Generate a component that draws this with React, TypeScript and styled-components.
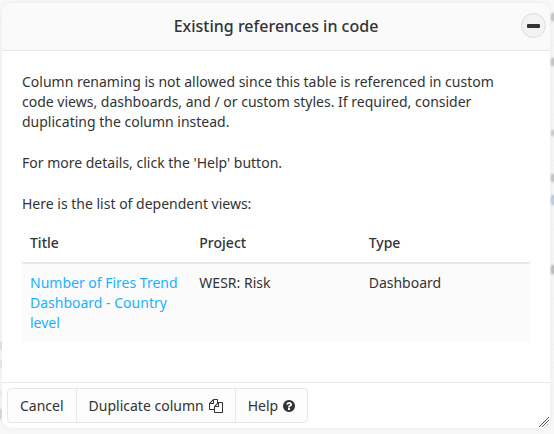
import React from "react";
import styled, { createGlobalStyle } from "styled-components";

const GlobalStyle = createGlobalStyle`
  *, *::before, *::after { box-sizing: border-box; }
  body {
    margin: 0;
    background: #f7f7f7;
    color: #333;
    font: 14px/20px "Noto Sans", "Open Sans", sans-serif;
  }
`;

const Page = styled.div`
  position: relative;
  min-height: 100vh;
  overflow: hidden;
  padding: 3px 4px 6px 2px;
`;

const Backdrop = styled.div`
  position: absolute;
  inset: 0;
  overflow: hidden;
  background: repeating-linear-gradient(#f8f8f8 0 22px, #f4f4f4 22px 23px);
`;

const Smudge = styled.span<{ $top: number; $side: "left" | "right"; $color: string; $height: number }>`
  position: absolute;
  top: ${(p) => p.$top}px;
  ${(p) => p.$side}: -2px;
  width: 5px;
  height: ${(p) => p.$height}px;
  border: 2px solid ${(p) => p.$color};
  border-radius: 3px;
  filter: blur(1px);
  opacity: 0.7;
`;

const Modal = styled.section`
  position: relative;
  display: flex;
  flex-direction: column;
  background: #fff;
  border-radius: 10px;
  box-shadow: 0 0 8px rgba(0, 0, 0, 0.06);
  overflow: hidden;
`;

const Header = styled.header`
  display: grid;
  grid-template-columns: 28px 1fr 28px;
  align-items: center;
  height: 48px;
  padding: 0 4px 2px;
  background: #fafafa;
  border-bottom: 1px solid #e7e7e7;
`;

const Heading = styled.h1`
  grid-column: 2;
  margin: 0;
  font-size: 16px;
  line-height: 24px;
  font-weight: 500;
  text-align: center;
`;

const CloseButton = styled.button`
  display: flex;
  align-items: center;
  justify-content: center;
  justify-self: end;
  width: 25px;
  height: 25px;
  padding: 0;
  border: 1px solid #ddd;
  border-radius: 50%;
  background: #f3f3f3;
  color: #333;
  cursor: pointer;
`;

const Body = styled.div`
  display: flex;
  flex-direction: column;
  gap: 21px;
  padding: 21px 20px 40px;
`;

const Text = styled.p`
  margin: 0;
`;

const Listing = styled.div`
  display: flex;
  flex-direction: column;
  gap: 10px;
`;

const Table = styled.table`
  width: 100%;
  table-layout: fixed;
  border-collapse: separate;
  border-spacing: 0;
`;

const HeadCell = styled.th`
  padding: 9px 8px;
  border-bottom: 2px solid #e7e7e7;
  font-weight: 500;
  text-align: left;
`;

const Cell = styled.td`
  padding: 9px 8px;
  background: #fbfbfb;
  vertical-align: top;
`;

const ViewLink = styled.a`
  color: #1bb1fa;
  text-decoration: none;
`;

const Footer = styled.footer`
  display: flex;
  padding: 5px;
  border-top: 1px solid #e7e7e7;
`;

const ActionButton = styled.button`
  display: flex;
  align-items: center;
  gap: 5px;
  height: 35px;
  padding: 0 12px;
  border: 1px solid #e7e7e7;
  background: #fcfcfc;
  color: #333;
  font: inherit;
  cursor: pointer;

  & + & { margin-left: -1px; }
  &:first-child { border-radius: 4px 0 0 4px; }
  &:last-child { border-radius: 0 4px 4px 0; }
`;

const ResizeGrip = styled.svg`
  position: absolute;
  right: 1px;
  bottom: 1px;
  cursor: nwse-resize;
`;

const CopyIcon = () => (
  <svg width="14" height="14" viewBox="0 0 1792 1792" fill="currentColor" aria-hidden="true">
    <path d="M1696 384q40 0 68 28t28 68v1216q0 40-28 68t-68 28h-960q-40 0-68-28t-28-68v-288h-544q-40 0-68-28t-28-68v-672q0-40 20-88t48-76l408-408q28-28 76-48t88-20h416q40 0 68 28t28 68v328q68-40 128-40h416zm-544 213l-299 299h299v-299zm-640-384l-299 299h299v-299zm196 647l316-316v-416h-384v416q0 40-28 68t-68 28h-416v640h512v-256q0-40 20-88t48-76zm956 804v-1152h-384v416q0 40-28 68t-68 28h-416v640h896z" />
  </svg>
);

const HelpIcon = () => (
  <svg width="12" height="12" viewBox="128 128 1536 1536" fill="currentColor" aria-hidden="true">
    <path d="M1024 1376v-192q0-14-9-23t-23-9h-192q-14 0-23 9t-9 23v192q0 14 9 23t23 9h192q14 0 23-9t9-23zm256-672q0-88-55.5-163t-138.5-116-170-41q-243 0-371 213-15 24 8 42l132 100q7 6 19 6 16 0 25-12 53-68 86-92 34-24 86-24 48 0 85.500 26t37.500 59q0 38-20 61t-68 45q-63 28-115.500 86.500t-52.500 125.500v36q0 14 9 23t23 9h192q14 0 23-9t9-23q0-19 21.500-49.500t54.500-49.500q32-18 49-28.500t46-35 44.500-48 28-60.500 12.500-81zm384 192q0 209-103 385.500t-279.500 279.500-385.500 103-385.500-103-279.500-279.500-103-385.500 103-385.500 279.500-279.500 385.500-103 385.500 103 279.500 279.500 103 385.500z" />
  </svg>
);

const MinusIcon = () => (
  <svg width="13" height="4" viewBox="0 0 13 4" fill="currentColor" aria-hidden="true">
    <rect width="13" height="4" rx="1" />
  </svg>
);

const smudges: { top: number; side: "left" | "right"; color: string; height: number }[] = [
  { top: 13, side: "right", color: "#999", height: 8 },
  { top: 58, side: "right", color: "#999", height: 8 },
  { top: 130, side: "right", color: "#aaa", height: 6 },
  { top: 174, side: "right", color: "#999", height: 8 },
  { top: 195, side: "right", color: "#7fa6d6", height: 10 },
  { top: 265, side: "right", color: "#888", height: 9 },
  { top: 342, side: "left", color: "#ccc", height: 8 },
  { top: 360, side: "left", color: "#e0d6c8", height: 8 },
  { top: 392, side: "left", color: "#f0e2c4", height: 4 },
  { top: 409, side: "left", color: "#a9bfd6", height: 10 },
];

export default function App() {
  return (
    <Page>
      <GlobalStyle />
      <Backdrop aria-hidden="true">
        {smudges.map((s) => (
          <Smudge key={s.top} $top={s.top} $side={s.side} $color={s.color} $height={s.height} />
        ))}
      </Backdrop>
      <Modal role="dialog" aria-labelledby="dialog-title">
        <Header>
          <Heading id="dialog-title">Existing references in code</Heading>
          <CloseButton type="button" aria-label="Minimize">
            <MinusIcon />
          </CloseButton>
        </Header>
        <Body>
          <Text>
            Column renaming is not allowed since this table is referenced in custom
            <br />
            code views, dashboards, and / or custom styles. If required, consider
            <br />
            duplicating the column instead.
          </Text>
          <Text>For more details, click the 'Help' button.</Text>
          <Listing>
            <Text>Here is the list of dependent views:</Text>
            <Table>
              <thead>
                <tr>
                  <HeadCell scope="col">Title</HeadCell>
                  <HeadCell scope="col">Project</HeadCell>
                  <HeadCell scope="col">Type</HeadCell>
                </tr>
              </thead>
              <tbody>
                <tr>
                  <Cell>
                    <ViewLink href="#dashboard">
                      Number of Fires Trend Dashboard - Country level
                    </ViewLink>
                  </Cell>
                  <Cell>WESR: Risk</Cell>
                  <Cell>Dashboard</Cell>
                </tr>
              </tbody>
            </Table>
          </Listing>
        </Body>
        <Footer>
          <ActionButton type="button">Cancel</ActionButton>
          <ActionButton type="button">
            Duplicate column <CopyIcon />
          </ActionButton>
          <ActionButton type="button">
            Help <HelpIcon />
          </ActionButton>
        </Footer>
        <ResizeGrip width="10" height="10" viewBox="0 0 10 10" stroke="#555" aria-hidden="true">
          <path d="M0 10L10 0M3 10L10 3M6 10L10 6M9 10L10 9" />
        </ResizeGrip>
      </Modal>
    </Page>
  );
}
